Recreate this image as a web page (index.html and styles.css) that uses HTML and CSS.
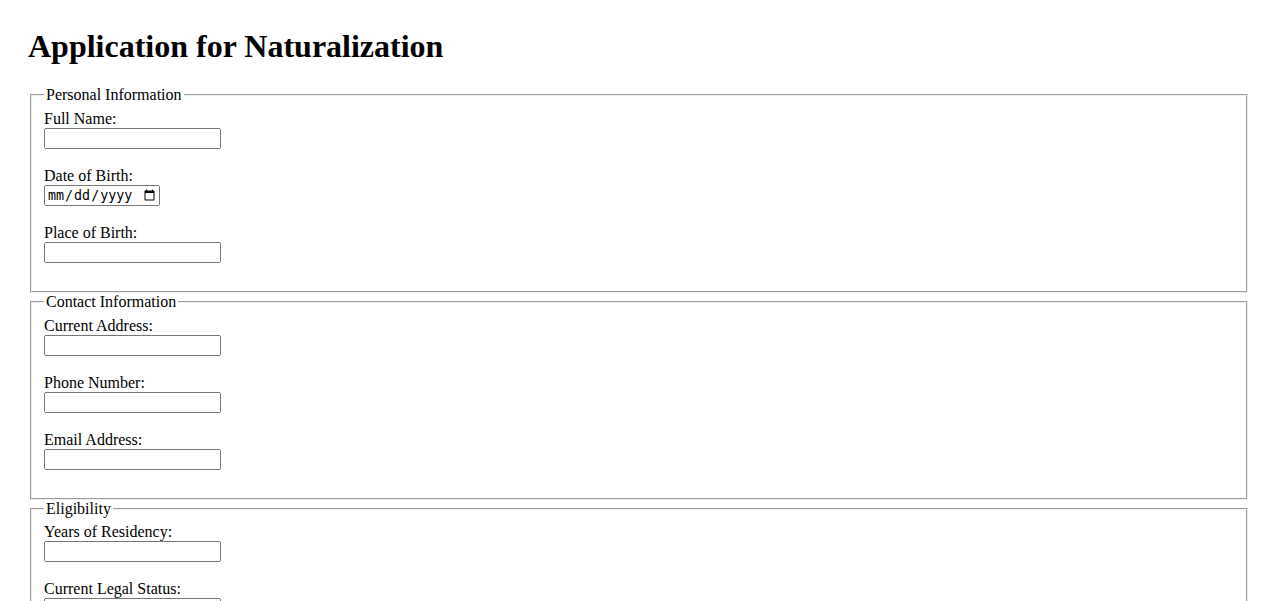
FILE: index.html
```html
<!DOCTYPE html>
<html lang="en">
<head>
<meta charset="utf-8">
<title>Application for Naturalization</title>
<link rel="stylesheet" href="styles.css">
</head>
<body>
<div class="page">
  <h1 class="title">Application for Naturalization</h1>
  <form class="form">
    <fieldset class="section">
      <legend class="section-legend">Personal Information</legend>
      <label class="field-label" for="fullName">Full Name:</label><br>
      <input class="field-input" type="text" id="fullName"><br><br>
      <label class="field-label" for="dob">Date of Birth:</label><br>
      <input class="field-input date-input" type="date" id="dob"><br><br>
      <label class="field-label" for="pob">Place of Birth:</label><br>
      <input class="field-input" type="text" id="pob"><br><br>
    </fieldset>
    <fieldset class="section">
      <legend class="section-legend">Contact Information</legend>
      <label class="field-label" for="address">Current Address:</label><br>
      <input class="field-input" type="text" id="address"><br><br>
      <label class="field-label" for="phone">Phone Number:</label><br>
      <input class="field-input" type="tel" id="phone"><br><br>
      <label class="field-label" for="email">Email Address:</label><br>
      <input class="field-input" type="email" id="email"><br><br>
    </fieldset>
    <fieldset class="section">
      <legend class="section-legend">Eligibility</legend>
      <label class="field-label" for="years">Years of Residency:</label><br>
      <input class="field-input" type="number" id="years"><br><br>
      <label class="field-label" for="status">Current Legal Status:</label><br>
      <input class="field-input" type="text" id="status"><br><br>
    </fieldset>
  </form>
</div>
</body>
</html>
```
FILE: styles.css
```css
html, body {
  margin: 0;
  padding: 0;
  background: #ffffff;
}

.page {
  padding: 28px;
  font-family: "Liberation Serif", "Times New Roman", serif;
  font-size: 16px;
  color: #000000;
}

.title {
  margin: 0 0 21.44px 0;
  font-size: 32px;
  font-weight: bold;
}

.form {
  margin: 0;
}

.section {
  margin: 0 2px;
}

.section-legend {
  padding: 0 2px;
}

.field-input {
  box-sizing: border-box;
  width: 177px;
  height: 21px;
}

.date-input {
  width: 116px;
}
```
